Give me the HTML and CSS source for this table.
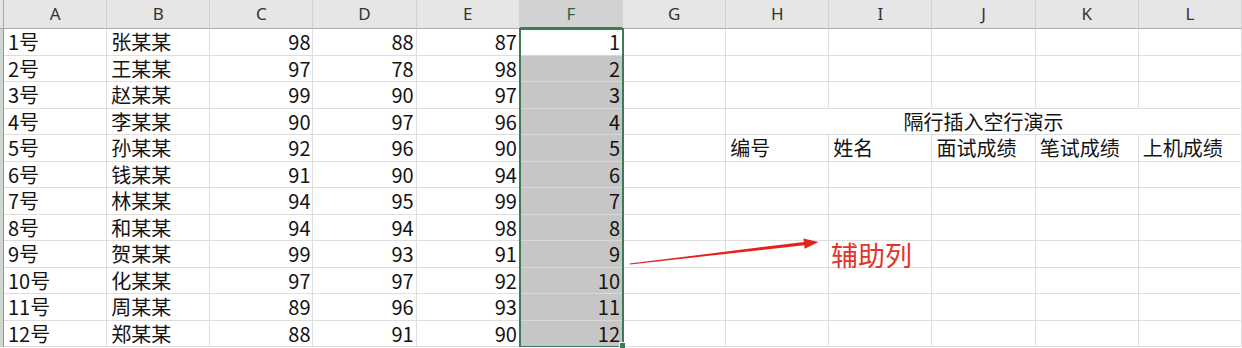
FILE: index.html
```html
<!DOCTYPE html>
<html lang="zh">
<head>
<meta charset="utf-8">
<link rel="stylesheet" href="styles.css">
</head>
<body>
<div class="sheet">
  <div class="corner"></div>
  <div class="ch">A</div><div class="ch">B</div><div class="ch">C</div><div class="ch">D</div><div class="ch">E</div><div class="ch sel">F</div><div class="ch">G</div><div class="ch">H</div><div class="ch">I</div><div class="ch">J</div><div class="ch">K</div><div class="ch">L</div>

  <div class="rh"></div><div class="c">1号</div><div class="c">张某某</div><div class="c n">98</div><div class="c n">88</div><div class="c n">87</div><div class="c n f active">1</div><div class="c"></div><div class="c"></div><div class="c"></div><div class="c"></div><div class="c"></div><div class="c"></div>
  <div class="rh"></div><div class="c">2号</div><div class="c">王某某</div><div class="c n">97</div><div class="c n">78</div><div class="c n">98</div><div class="c n f">2</div><div class="c"></div><div class="c"></div><div class="c"></div><div class="c"></div><div class="c"></div><div class="c"></div>
  <div class="rh"></div><div class="c">3号</div><div class="c">赵某某</div><div class="c n">99</div><div class="c n">90</div><div class="c n">97</div><div class="c n f">3</div><div class="c"></div><div class="c"></div><div class="c"></div><div class="c"></div><div class="c"></div><div class="c"></div>
  <div class="rh"></div><div class="c">4号</div><div class="c">李某某</div><div class="c n">90</div><div class="c n">97</div><div class="c n">96</div><div class="c n f">4</div><div class="c"></div><div class="c title">隔行插入空行演示</div>
  <div class="rh"></div><div class="c">5号</div><div class="c">孙某某</div><div class="c n">92</div><div class="c n">96</div><div class="c n">90</div><div class="c n f">5</div><div class="c"></div><div class="c">编号</div><div class="c">姓名</div><div class="c">面试成绩</div><div class="c">笔试成绩</div><div class="c">上机成绩</div>
  <div class="rh"></div><div class="c">6号</div><div class="c">钱某某</div><div class="c n">91</div><div class="c n">90</div><div class="c n">94</div><div class="c n f">6</div><div class="c"></div><div class="c"></div><div class="c"></div><div class="c"></div><div class="c"></div><div class="c"></div>
  <div class="rh"></div><div class="c">7号</div><div class="c">林某某</div><div class="c n">94</div><div class="c n">95</div><div class="c n">99</div><div class="c n f">7</div><div class="c"></div><div class="c"></div><div class="c"></div><div class="c"></div><div class="c"></div><div class="c"></div>
  <div class="rh"></div><div class="c">8号</div><div class="c">和某某</div><div class="c n">94</div><div class="c n">94</div><div class="c n">98</div><div class="c n f">8</div><div class="c"></div><div class="c"></div><div class="c"></div><div class="c"></div><div class="c"></div><div class="c"></div>
  <div class="rh"></div><div class="c">9号</div><div class="c">贺某某</div><div class="c n">99</div><div class="c n">93</div><div class="c n">91</div><div class="c n f">9</div><div class="c"></div><div class="c"></div><div class="c"></div><div class="c"></div><div class="c"></div><div class="c"></div>
  <div class="rh"></div><div class="c">10号</div><div class="c">化某某</div><div class="c n">97</div><div class="c n">97</div><div class="c n">92</div><div class="c n f">10</div><div class="c"></div><div class="c"></div><div class="c"></div><div class="c"></div><div class="c"></div><div class="c"></div>
  <div class="rh"></div><div class="c">11号</div><div class="c">周某某</div><div class="c n">89</div><div class="c n">96</div><div class="c n">93</div><div class="c n f">11</div><div class="c"></div><div class="c"></div><div class="c"></div><div class="c"></div><div class="c"></div><div class="c"></div>
  <div class="rh"></div><div class="c">12号</div><div class="c">郑某某</div><div class="c n">88</div><div class="c n">91</div><div class="c n">90</div><div class="c n f">12</div><div class="c"></div><div class="c"></div><div class="c"></div><div class="c"></div><div class="c"></div><div class="c"></div>

  <div class="selbox"><span class="handle"></span></div>

  <svg class="arrow" width="1242" height="348" viewBox="0 0 1242 348">
    <polygon points="630,264.6 804.2,245.2 804.8,248.8 818.5,242 803.4,238.4 803.9,241.9 629.6,263.6" fill="#e5231b"/>
  </svg>
  <div class="label">辅助列</div>
</div>
</body>
</html>
```

FILE: styles.css
```css
html, body {
  margin: 0;
  padding: 0;
  background: #ffffff;
  overflow: hidden;
}

.sheet {
  position: relative;
  width: 1242px;
  height: 348px;
  display: grid;
  grid-template-columns: 4px repeat(12, 1fr);
  grid-template-rows: 29px repeat(12, 26.5px);
  font-family: "Noto Sans CJK SC", "Noto Sans", sans-serif;
}

.corner {
  background: #e4e4e4;
  border-right: 1px solid #a9a9a9;
  border-bottom: 1px solid #a9a9a9;
  box-sizing: border-box;
}

.ch {
  box-sizing: border-box;
  background: #e6e6e6;
  border-right: 1px solid #d2d2d2;
  border-bottom: 1px solid #ababab;
  text-align: center;
  font-family: "Noto Sans", "Noto Sans CJK SC", sans-serif;
  font-size: 17px;
  line-height: 28px;
  color: #333333;
}

.ch.sel {
  background: #d2d2d2;
  border-bottom: 2px solid #3d7a55;
  color: #2f5f43;
}

.rh {
  box-sizing: border-box;
  background: #cdd6cf;
  border-right: 1px solid #8c9c90;
}

.c {
  box-sizing: border-box;
  border-right: 1px solid #dedede;
  border-bottom: 1px solid #dedede;
  font-size: 20px;
  line-height: 26px;
  padding: 0 4px;
  white-space: nowrap;
  overflow: visible;
  color: #141414;
}

.n {
  text-align: right;
  padding-right: 2px;
}

.f {
  background: #c6c6c6;
  border-right-color: #c6c6c6;
  border-bottom-color: #d8d8d8;
}

.f.active {
  background: #ffffff;
}

.title {
  grid-column: span 5;
  text-align: center;
}

.selbox {
  position: absolute;
  grid-column: 7 / 8;
  grid-row: 2 / 14;
  inset: -1px -1px 0 -1px;
  border: 2px solid #3d7a55;
  border-bottom-width: 1px;
  pointer-events: none;
}

.handle {
  position: absolute;
  right: -4px;
  bottom: -3px;
  width: 5px;
  height: 5px;
  background: #3d7a55;
  border: 1px solid #ffffff;
}

.arrow {
  position: absolute;
  left: 0;
  top: 0;
  pointer-events: none;
}

.label {
  position: absolute;
  left: 831px;
  top: 237px;
  font-size: 27px;
  line-height: 36px;
  color: #e3342a;
  letter-spacing: 0;
}
```
